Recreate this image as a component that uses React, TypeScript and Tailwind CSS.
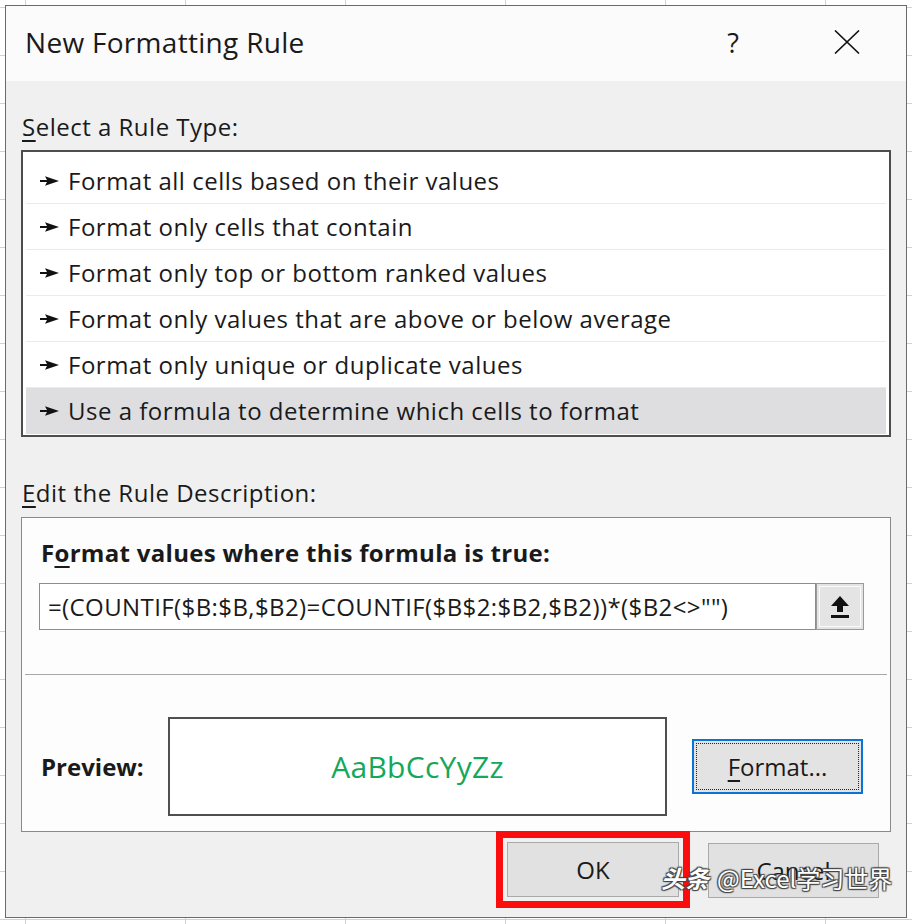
import React from "react"

const rules = [
  "Format all cells based on their values",
  "Format only cells that contain",
  "Format only top or bottom ranked values",
  "Format only values that are above or below average",
  "Format only unique or duplicate values",
  "Use a formula to determine which cells to format",
]

const Pointer = () => (
  <svg width="20" height="10" viewBox="0 0 20 10" className="shrink-0">
    <polygon points="0,4 7,4 5,0.3 19,5 5,9.7 7,6 0,6" fill="#111" />
  </svg>
)

const App = () => {
  return (
    <div className="relative h-[924px] w-[912px] overflow-hidden bg-white bg-[repeating-linear-gradient(to_bottom,transparent_0px,transparent_7px,#d2d2d2_7px,#d2d2d2_8px,transparent_8px,transparent_48px),repeating-linear-gradient(to_right,transparent_0px,transparent_25px,#d2d2d2_25px,#d2d2d2_26px,transparent_26px,transparent_160px)] pt-[5px] pl-[5px] font-['Open_Sans',sans-serif] text-[#1a1a1a]">
      <div className="flex h-[913px] w-[902px] flex-col border border-[#6b6b6b] bg-[#f0f0f0]">
        {/* title bar */}
        <div className="flex h-[75px] items-center bg-[#fbfbfb] pb-[3px] pl-[19px]">
          <span className="text-[28px] tracking-[0.3px]">New Formatting Rule</span>
          <span className="ml-auto mr-[95px] text-[27px] leading-none">?</span>
          <svg width="26" height="24" viewBox="0 0 26 24" className="mr-[46px]">
            <path d="M1 0.5 L25 23.5 M25 0.5 L1 23.5" stroke="#111" strokeWidth="1.6" />
          </svg>
        </div>

        <div className="flex flex-1 flex-col px-[15px]">
          <div className="mt-[31px] pl-[1px] text-[24px] leading-[30px] tracking-[0.5px]">
            <span className="underline underline-offset-4">S</span>elect a Rule Type:
          </div>

          {/* rule type list */}
          <div className="mt-[8px] flex flex-col border-2 border-[#4d4d4d] bg-white px-[3px] pt-[6px] pb-[1px]">
            {rules.map((r, i) => (
              <div
                key={r}
                className={
                  i === rules.length - 1
                    ? "flex h-[46px] items-center gap-[8px] bg-[#dedee1] pl-[14px] text-[24px] tracking-[0.5px]"
                    : "flex h-[46px] items-center gap-[8px] border-b border-[#ebebeb] pl-[14px] text-[24px] tracking-[0.5px]"
                }
              >
                <Pointer />
                <span>{r}</span>
              </div>
            ))}
          </div>

          <div className="mt-[41px] pl-[1px] text-[24px] leading-[30px] tracking-[0.5px]">
            <span className="underline underline-offset-4">E</span>dit the Rule Description:
          </div>

          {/* description box */}
          <div className="mt-[9px] flex h-[315px] flex-col border border-[#8a8a8a] bg-[#fdfdfd]">
            <div className="mt-[20px] pl-[19px] text-[24px] font-bold leading-[30px] tracking-[0.3px]">
              F<span className="underline underline-offset-4">o</span>rmat values where this formula is true:
            </div>
            <div className="mt-[15px] ml-[17px] flex">
              <div className="flex h-[47px] w-[777px] items-center border border-[#8d8d8d] bg-white pl-[8px] text-[24px] tracking-[0.4px]">
                =(COUNTIF($B:$B,$B2)=COUNTIF($B$2:$B2,$B2))*($B2&lt;&gt;"")
              </div>
              <div className="flex h-[47px] w-[48px] items-center justify-center border border-[#9a9a9a] bg-[#e4e4e4]">
                <div className="flex h-[41px] w-[42px] items-center justify-center border border-[#fafafa]">
                  <svg width="20" height="24" viewBox="0 0 20 24">
                    <polygon points="10,1 19,11 13,11 13,17 7,17 7,11 1,11" fill="#111" />
                    <rect x="1" y="20" width="18" height="3" fill="#111" />
                  </svg>
                </div>
              </div>
            </div>
            <div className="mx-[3px] mt-[44px] h-px bg-[#a8a8a8]" />
            <div className="mt-[42px] flex items-center">
              <span className="w-[146px] pl-[19px] text-[24px] font-bold">Preview:</span>
              <div className="flex h-[99px] w-[499px] items-center justify-center border-2 border-[#4f4f4f] bg-white text-[30px] tracking-[0.3px] text-[#13a85a]">
                AaBbCcYyZz
              </div>
              <div className="ml-[25px] flex h-[55px] w-[171px] items-center justify-center border-2 border-[#0a74d6] bg-[#e3e3e3] p-[2px]">
                <div className="flex h-full w-full items-center justify-center border border-dotted border-[#222] text-[24px]">
                  <span className="underline underline-offset-4">F</span>ormat...
                </div>
              </div>
            </div>
          </div>

          {/* buttons */}
          <div className="flex items-start justify-end pr-[12px]">
            <div className="-mt-px border-[7px] border-[#fb0d0d] p-[4px]">
              <div className="flex h-[55px] w-[172px] items-center justify-center border border-[#a9a9a9] bg-[#e1e1e1] text-[24px]">
                OK
              </div>
            </div>
            <div className="mt-[11px] ml-[18px] flex h-[55px] w-[171px] items-center justify-center border border-[#a9a9a9] bg-[#e1e1e1] text-[24px]">
              Cancel
            </div>
          </div>
        </div>
      </div>

      {/* watermark */}
      <div className="absolute top-[866px] left-[661px] flex items-center gap-[8px] font-['Noto_Sans_CJK_SC',sans-serif] text-[24px] leading-none text-white [text-shadow:1px_1px_1px_#444,-1px_-1px_1px_#444,1px_-1px_1px_#444,-1px_1px_1px_#444]">
        <span className="font-bold italic">头条</span>
        <span>@Excel学习世界</span>
      </div>
    </div>
  )
}

export default App
